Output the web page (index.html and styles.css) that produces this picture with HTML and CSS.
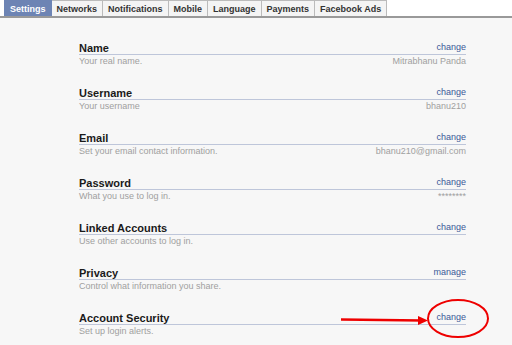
FILE: index.html
```html
<!DOCTYPE html>
<html>
    <head>
        <meta http-equiv="Content-Type" content="text/html; charset=utf-8" />
        <title>Account Settings</title>
        <link rel="stylesheet" href="styles.css">
    </head>
    <body>
        <ul class="tabs">
            <li class="active">Settings</li>
            <li>Networks</li>
            <li>Notifications</li>
            <li>Mobile</li>
            <li>Language</li>
            <li>Payments</li>
            <li>Facebook Ads</li>
        </ul>
        <div class="settings">
            <div class="row">
                <div class="head"><b>Name</b><a href="#">change</a></div>
                <div class="info"><span>Your real name.</span><span>Mitrabhanu Panda</span></div>
            </div>
            <div class="row">
                <div class="head"><b>Username</b><a href="#">change</a></div>
                <div class="info"><span>Your username</span><span>bhanu210</span></div>
            </div>
            <div class="row">
                <div class="head"><b>Email</b><a href="#">change</a></div>
                <div class="info"><span>Set your email contact information.</span><span>bhanu210@gmail.com</span></div>
            </div>
            <div class="row">
                <div class="head"><b>Password</b><a href="#">change</a></div>
                <div class="info"><span>What you use to log in.</span><span>********</span></div>
            </div>
            <div class="row">
                <div class="head"><b>Linked Accounts</b><a href="#">change</a></div>
                <div class="info"><span>Use other accounts to log in.</span></div>
            </div>
            <div class="row">
                <div class="head"><b>Privacy</b><a href="#">manage</a></div>
                <div class="info"><span>Control what information you share.</span></div>
            </div>
            <div class="row">
                <div class="head"><b>Account Security</b><a href="#" class="marked">change</a></div>
                <div class="info"><span>Set up login alerts.</span></div>
            </div>
        </div>
        <!-- red annotation drawn over the screenshot -->
        <svg class="note" width="512" height="345" viewBox="0 0 512 345">
            <path d="M341 319.5 L422 320.5" stroke="#ee0000" stroke-width="2.5" fill="none"/>
            <path d="M418 316 L428 320.5 L418 325 Z" fill="#ee0000"/>
            <ellipse cx="458" cy="318.5" rx="30" ry="18.5" stroke="#ee0000" stroke-width="2" fill="none"/>
        </svg>
    </body>
</html>
```
FILE: styles.css
```css
body {
    margin:         0;
    background:     #f7f7f7;
    font-size:      11px;
    font-family:    "Liberation Sans", Arial, sans-serif;
    color:          #333;
    position:       relative;
    height:         345px;
    overflow:       hidden;
}
ul.tabs {
    list-style:     none;
    margin:         0;
    padding:        0 0 0 4px;
    display:        flex;
    background:     #fff;
    border-bottom:  2px solid #999;
}
ul.tabs li {
    height:         15px;
    line-height:    16px;
    padding:        0 5px;
    font-weight:    bold;
    font-size:      9px;
    color:          #333;
    background:     #f4f4f4;
    border:         1px solid #bbb;
    border-bottom:  none;
    border-left:    none;
}
ul.tabs li:first-child {
    border-left:    1px solid #bbb;
}
ul.tabs li.active {
    background:     #6d84b4;
    border-color:   #6d84b4;
    color:          #fff;
}
div.settings {
    width:          387px;
    margin:         21px 0 0 79px;
    display:        flex;
    flex-direction: column;
    gap:            15px;
}
div.row div.head {
    display:        flex;
    justify-content: space-between;
    align-items:    center;
    border-bottom:  1px solid #bec6da;
    height:         15px;
}
div.row div.head b {
    font-size:      11px;
    color:          #1a1a1a;
    margin-top:     2px;
}
div.row div.head a {
    font-size:      9px;
    color:          #3b5998;
    text-decoration: none;
}
div.row div.info {
    display:        flex;
    justify-content: space-between;
    font-size:      9px;
    color:          #a0a0a0;
    height:         13px;
    margin-top:     1px;
}
svg.note {
    position:       absolute;
    left:           0;
    top:            0;
}
```
